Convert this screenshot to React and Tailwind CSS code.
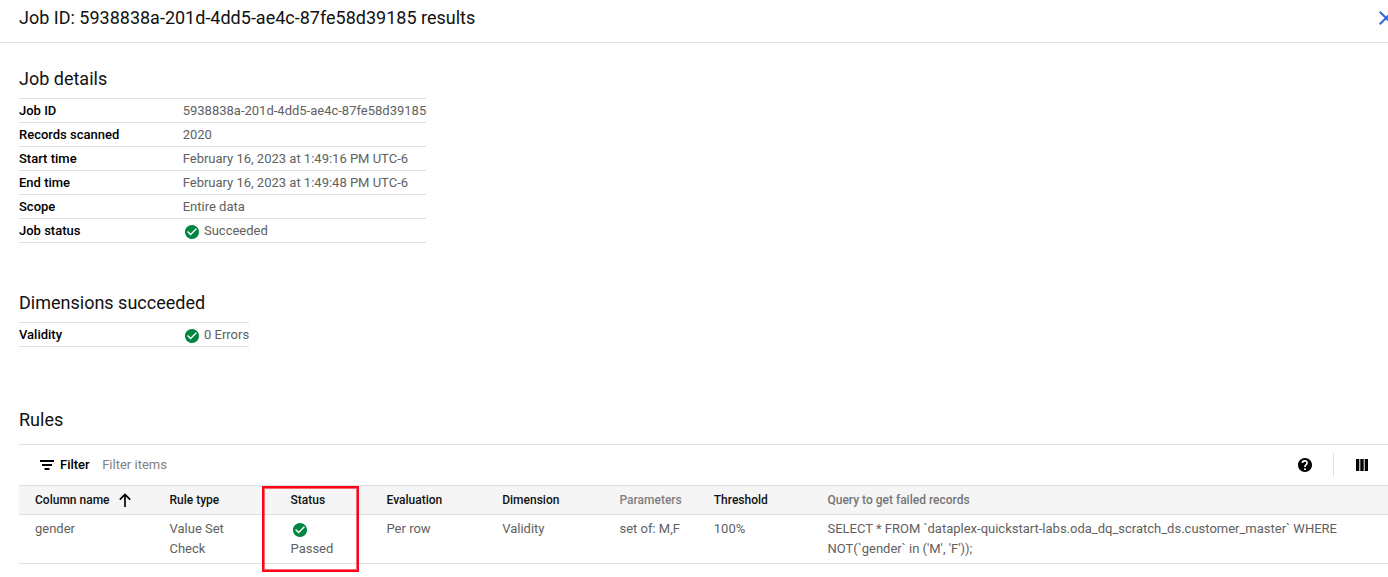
import React from "react";

function CheckIcon({ className = "" }) {
  return (
    <svg viewBox="2 2 20 20" className={`size-3.5 shrink-0 fill-[#018642] ${className}`}>
      <path d="M12 2C6.48 2 2 6.48 2 12s4.48 10 10 10 10-4.48 10-10S17.52 2 12 2zm-2 15-5-5 1.41-1.41L10 14.17l7.59-7.59L19 8l-9 9z" />
    </svg>
  );
}

function Details({ rows, className }) {
  return (
    <dl className={`border-t border-[#dfdfdf] ${className}`}>
      {rows.map(([label, value, ok]) => (
        <div key={label} className="flex h-6 border-b border-[#dfdfdf] leading-[23px]">
          <dt className="w-[163.7px] shrink-0 font-medium text-black">{label}</dt>
          <dd className="flex items-center whitespace-nowrap">
            {ok && <CheckIcon className="mt-[3px] mr-[5px] ml-[2.3px]" />}
            {value}
          </dd>
        </div>
      ))}
    </dl>
  );
}

const heading = "text-[18px] leading-6 text-[#111111]";
const columns =
  "grid grid-cols-[134.5px_121px_96px_115.7px_117.3px_94.3px_113.7px_1fr] border-b border-[#dfdfdf] pl-4";

export default function App() {
  return (
    <main className="h-[577px] w-full overflow-hidden bg-white font-['Roboto',sans-serif] text-[13px] text-[#616161]">
      <header className="flex h-[43px] items-start justify-between border-b border-[#dfdfdf] pt-1.5 pl-[19px]">
        <h1 className={heading}>Job ID: 5938838a-201d-4dd5-ae4c-87fe58d39185 results</h1>
        <svg viewBox="5 5 14 14" className="mt-[5px] -mr-[5px] size-[14px] shrink-0 fill-[#3367d6]">
          <path d="M19 6.41 17.59 5 12 10.59 6.41 5 5 6.41 10.59 12 5 17.59 6.41 19 12 13.41 17.59 19 19 17.59 13.41 12z" />
        </svg>
      </header>

      <div className="pl-[19px]">
        <section className="pt-6">
          <h2 className={heading}>Job details</h2>
          <Details
            className="mt-[7px] w-[407px]"
            rows={[
              ["Job ID", "5938838a-201d-4dd5-ae4c-87fe58d39185"],
              ["Records scanned", "2020"],
              ["Start time", "February 16, 2023 at 1:49:16 PM UTC-6"],
              ["End time", "February 16, 2023 at 1:49:48 PM UTC-6"],
              ["Scope", "Entire data"],
              ["Job status", "Succeeded", true],
            ]}
          />
        </section>

        <section className="pt-12">
          <h2 className={heading}>Dimensions succeeded</h2>
          <Details className="mt-[7px] w-[230px]" rows={[["Validity", "0 Errors", true]]} />
        </section>

        <section className="pt-[61px]">
          <h2 className={heading}>Rules</h2>
          <div className="mt-3 flex h-[41px] items-center border-t border-[#dfdfdf] pl-[21px]">
            <svg viewBox="0 0 14 10" className="mr-1.5 h-2.5 w-3.5 fill-black">
              <path d="M0 0h14v2H0zM2 4h10v2H2zM4.500 8h5v2h-5z" />
            </svg>
            <span className="mr-[12.5px] font-medium text-black">Filter</span>
            <span className="text-[#808080]">Filter items</span>
            <svg viewBox="2 2 20 20" className="mr-[21px] ml-auto size-3.5 fill-black">
              <path d="M12 2C6.480 2 2 6.480 2 12s4.480 10 10 10 10-4.480 10-10S17.520 2 12 2zm1.200 17h-2.400v-2.300h2.400V19zm2.100-7.700-.9.900c-.8.800-1.200 1.400-1.200 2.800h-2.400v-.5c0-1.100.5-2.100 1.200-2.800l1.200-1.300c.4-.3.6-.8.6-1.400 0-1.100-.7-1.700-1.600-1.700S9.400 7.900 9.400 9H7c0-2.500 1.800-4.200 4-4.200h1c2.400 0 4.200 1.700 4.200 3.900 0 1-.4 1.900-.9 2.600z" />
            </svg>
            <div className="h-6 w-px bg-[#e2e2e2]" />
            <svg viewBox="0 0 12 12" className="mr-5 ml-[22px] size-3 fill-black">
              <path d="M0 0h3.300v12H0zM4.300 0h3.400v12H4.300zM8.700 0H12v12H8.700z" />
            </svg>
          </div>

          <div className="relative">
            <div className={`${columns} h-[30px] items-center border-t bg-[#f5f5f5] text-[12px] font-medium text-[#111111]`}>
              <span className="flex items-center">
                Column name
                <svg viewBox="0 0 12 14" className="ml-[9px] h-3.5 w-3 fill-none stroke-black stroke-[1.700]">
                  <path d="M6 14V1.500M.8 6.700 6 1.500l5.200 5.200" />
                </svg>
              </span>
              <span>Rule type</span>
              <span>Status</span>
              <span>Evaluation</span>
              <span>Dimension</span>
              <span className="text-[#808080]">Parameters</span>
              <span>Threshold</span>
              <span className="text-[#757575]">Query to get failed records</span>
            </div>
            <div className={`${columns} h-[49px] pt-1 leading-5`}>
              <span>gender</span>
              <span>Value Set<br />Check</span>
              <span>
                <span className="flex h-5 items-center pl-[2.5px]"><CheckIcon className="mt-0.5" /></span>
                Passed
              </span>
              <span>Per row</span>
              <span>Validity</span>
              <span>set of: M,F</span>
              <span>100%</span>
              <span className="whitespace-nowrap">
                SELECT * FROM `dataplex-quickstart-labs.oda_dq_scratch_ds.customer_master` WHERE
                <br />
                NOT(`gender` in ('M', 'F'));
              </span>
            </div>
            <div className="absolute top-px left-[243px] h-[86px] w-[97px] border-2 border-[#fa0519] outline-1 -outline-offset-3 outline-[#fa0519]/60" />
          </div>
        </section>
      </div>
    </main>
  );
}
